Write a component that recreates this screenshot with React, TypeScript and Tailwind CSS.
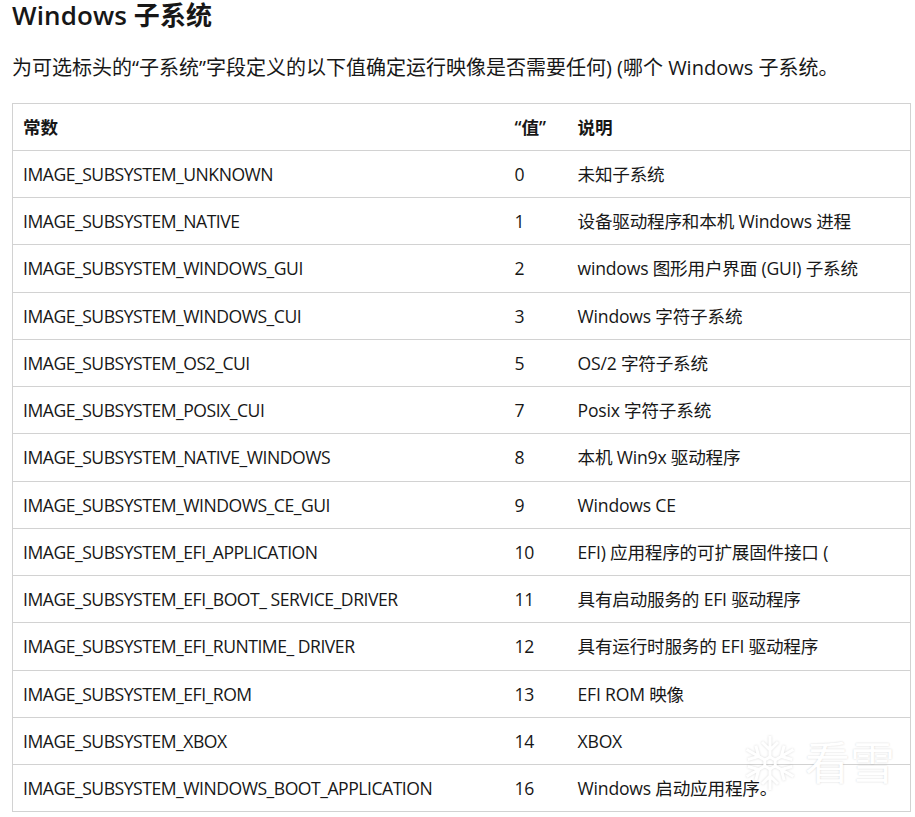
import React from 'react';

const rows = [
  ['IMAGE_SUBSYSTEM_UNKNOWN', '0', '未知子系统'],
  ['IMAGE_SUBSYSTEM_NATIVE', '1', '设备驱动程序和本机 Windows 进程'],
  ['IMAGE_SUBSYSTEM_WINDOWS_GUI', '2', 'windows 图形用户界面 (GUI) 子系统'],
  ['IMAGE_SUBSYSTEM_WINDOWS_CUI', '3', 'Windows 字符子系统'],
  ['IMAGE_SUBSYSTEM_OS2_CUI', '5', 'OS/2 字符子系统'],
  ['IMAGE_SUBSYSTEM_POSIX_CUI', '7', 'Posix 字符子系统'],
  ['IMAGE_SUBSYSTEM_NATIVE_WINDOWS', '8', '本机 Win9x 驱动程序'],
  ['IMAGE_SUBSYSTEM_WINDOWS_CE_GUI', '9', 'Windows CE'],
  ['IMAGE_SUBSYSTEM_EFI_APPLICATION', '10', 'EFI) 应用程序的可扩展固件接口 ('],
  ['IMAGE_SUBSYSTEM_EFI_BOOT_ SERVICE_DRIVER', '11', '具有启动服务的 EFI 驱动程序'],
  ['IMAGE_SUBSYSTEM_EFI_RUNTIME_ DRIVER', '12', '具有运行时服务的 EFI 驱动程序'],
  ['IMAGE_SUBSYSTEM_EFI_ROM', '13', 'EFI ROM 映像'],
  ['IMAGE_SUBSYSTEM_XBOX', '14', 'XBOX'],
  ['IMAGE_SUBSYSTEM_WINDOWS_BOOT_APPLICATION', '16', 'Windows 启动应用程序。'],
];

const Snowflake = () => (
  <svg width="54" height="58" viewBox="0 0 54 58" fill="none" stroke="#ffffff" strokeWidth="3" className="drop-shadow-[0_0_1px_rgba(0,0,0,0.15)]">
    <path d="M27 23l5.2 3v6L27 35l-5.2-3v-6z" />
    {[0, 60, 120, 180, 240, 300].map((deg) => (
      <g key={deg} transform={`rotate(${deg} 27 29)`}>
        <path d="M27 23V2M19 8l8 8 8-8" />
      </g>
    ))}
  </svg>
);

const App: React.FC = () => {
  return (
    <div className="relative w-[915px] h-[817px] bg-white text-[#171717] font-['Open_Sans','Noto_Sans_CJK_SC',sans-serif]">
      <div className="px-3">
        <h2 className="h-[53px] text-[26px] leading-[31px] font-semibold tracking-[0.1px]">Windows 子系统</h2>
        <p className="h-[50px] text-[20px] leading-[29px]">为可选标头的“子系统”字段定义的以下值确定运行映像是否需要任何) (哪个 Windows 子系统。</p>
        <table className="w-[899px] table-fixed border-collapse border border-[#d2d2d2] text-[17.6px]">
          <colgroup>
            <col className="w-[492px]" />
            <col className="w-[63px]" />
            <col />
          </colgroup>
          <thead>
            <tr className="h-[47px] border-b border-[#d2d2d2]">
              <th className="pl-[10px] text-left font-semibold">常数</th>
              <th className="pl-[10px] text-left font-semibold">“值”</th>
              <th className="pl-[10px] text-left font-semibold">说明</th>
            </tr>
          </thead>
          <tbody>
            {rows.map((row, i) => (
              <tr key={row[0]} className={`border-b border-[#d2d2d2] ${i % 4 === 2 ? 'h-[48px]' : 'h-[47px]'}`}>
                <td className="pl-[10px] tracking-[-0.49px]">{row[0]}</td>
                <td className="pl-[10px] tracking-[-0.3px]">{row[1]}</td>
                <td className="pl-[10px] tracking-[-0.2px]">{row[2]}</td>
              </tr>
            ))}
          </tbody>
        </table>
      </div>
      <div className="absolute left-[743px] top-[734px] flex items-center gap-[8px]">
        <Snowflake />
        <span className="text-[45px] leading-[58px] text-white [text-shadow:0_0_2px_rgba(0,0,0,0.18)]">看雪</span>
      </div>
    </div>
  );
};

export default App;
